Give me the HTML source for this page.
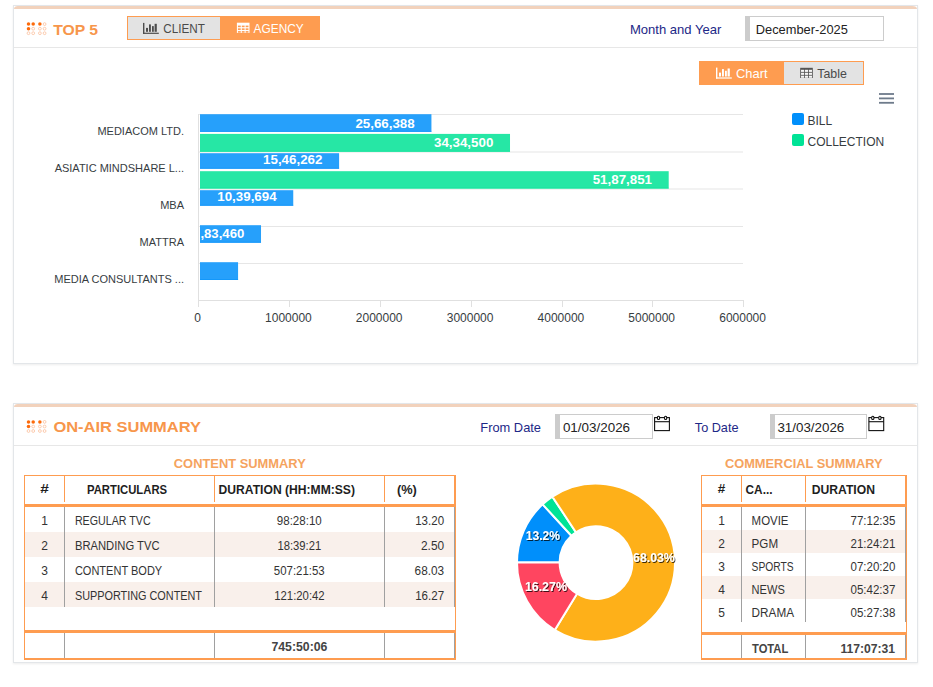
<!DOCTYPE html>
<html><head><meta charset="utf-8"><title>Dashboard</title>
<style>
html,body{margin:0;padding:0;background:#fff;}
body{width:933px;height:687px;overflow:hidden;}
svg{display:block;font-family:"Liberation Sans",sans-serif;}
</style></head>
<body>
<svg width="933" height="687" viewBox="0 0 933 687">
<defs><filter id="cs" x="-5%" y="-5%" width="110%" height="110%"><feGaussianBlur stdDeviation="1.2"/></filter></defs>
<rect x="13" y="6" width="905" height="359" fill="#000" opacity="0.07" filter="url(#cs)"/>
<rect x="13.5" y="5.5" width="904" height="358" fill="#fff" stroke="#e3e6e9" stroke-width="1"/>
<path d="M14 9 Q14 6 18 6 L912 6 Q917 6 917 9 Z" fill="#f2d2bc"/>
<rect x="13" y="404" width="905" height="260" fill="#000" opacity="0.07" filter="url(#cs)"/>
<rect x="13.5" y="403.5" width="904" height="259" fill="#fff" stroke="#e3e6e9" stroke-width="1"/>
<path d="M14 407 Q14 404 18 404 L912 404 Q917 404 917 407 Z" fill="#f2d2bc"/>
<rect x="14" y="47" width="903" height="1" fill="#e7e7e7"/>
<rect x="14" y="445" width="903" height="1" fill="#e7e7e7"/>
<circle cx="28.5" cy="24.1" r="1.75" fill="#fd6a0a"/>
<circle cx="28.5" cy="28.700000000000003" r="1.75" fill="#fd6a0a"/>
<circle cx="28.5" cy="33.2" r="1.4" fill="none" stroke="#fbb48a" stroke-width="0.65"/>
<circle cx="33.2" cy="24.1" r="1.75" fill="#fd6a0a"/>
<circle cx="33.2" cy="28.700000000000003" r="1.4" fill="none" stroke="#fbb48a" stroke-width="0.65"/>
<circle cx="33.2" cy="33.2" r="1.4" fill="none" stroke="#fbb48a" stroke-width="0.65"/>
<circle cx="39.9" cy="24.1" r="1.75" fill="#fd6a0a"/>
<circle cx="39.9" cy="28.700000000000003" r="1.4" fill="none" stroke="#fbb48a" stroke-width="0.65"/>
<circle cx="39.9" cy="33.2" r="1.4" fill="none" stroke="#fbb48a" stroke-width="0.65"/>
<circle cx="44.6" cy="24.1" r="1.4" fill="none" stroke="#fbb48a" stroke-width="0.65"/>
<circle cx="44.6" cy="28.700000000000003" r="1.4" fill="none" stroke="#fbb48a" stroke-width="0.65"/>
<circle cx="44.6" cy="33.2" r="1.4" fill="none" stroke="#fbb48a" stroke-width="0.65"/>
<circle cx="28.5" cy="421.9" r="1.75" fill="#fd6a0a"/>
<circle cx="28.5" cy="426.5" r="1.75" fill="#fd6a0a"/>
<circle cx="28.5" cy="431.0" r="1.4" fill="none" stroke="#fbb48a" stroke-width="0.65"/>
<circle cx="33.2" cy="421.9" r="1.75" fill="#fd6a0a"/>
<circle cx="33.2" cy="426.5" r="1.4" fill="none" stroke="#fbb48a" stroke-width="0.65"/>
<circle cx="33.2" cy="431.0" r="1.4" fill="none" stroke="#fbb48a" stroke-width="0.65"/>
<circle cx="39.9" cy="421.9" r="1.75" fill="#fd6a0a"/>
<circle cx="39.9" cy="426.5" r="1.4" fill="none" stroke="#fbb48a" stroke-width="0.65"/>
<circle cx="39.9" cy="431.0" r="1.4" fill="none" stroke="#fbb48a" stroke-width="0.65"/>
<circle cx="44.6" cy="421.9" r="1.4" fill="none" stroke="#fbb48a" stroke-width="0.65"/>
<circle cx="44.6" cy="426.5" r="1.4" fill="none" stroke="#fbb48a" stroke-width="0.65"/>
<circle cx="44.6" cy="431.0" r="1.4" fill="none" stroke="#fbb48a" stroke-width="0.65"/>
<text x="53.2" y="34.7" font-size="15.5" fill="#f7964b" font-weight="bold" textLength="44.9" lengthAdjust="spacingAndGlyphs">TOP 5</text>
<text x="53.4" y="432.4" font-size="15.5" fill="#f7964b" font-weight="bold" textLength="147.6" lengthAdjust="spacingAndGlyphs">ON-AIR SUMMARY</text>
<rect x="127" y="16" width="193" height="24" fill="#fe9c50"/>
<rect x="128" y="17" width="92" height="22" fill="#e3e3e3"/>
<g fill="#4d4d4d"><rect x="143" y="22.9" width="1.4" height="11"/><rect x="143" y="32.7" width="15.8" height="1.2"/><rect x="146" y="27.9" width="2" height="3.9"/><rect x="149" y="24.4" width="1.9" height="7.4"/><rect x="152" y="26.099999999999998" width="1.8" height="5.7"/><rect x="154.6" y="23.799999999999997" width="2.2" height="8"/></g>
<text x="163.2" y="33" font-size="13" fill="#4a4a4a" textLength="41.6" lengthAdjust="spacingAndGlyphs">CLIENT</text>
<g><rect x="236.9" y="22.7" width="12.6" height="10.2" fill="#ffffff"/><g fill="#fe9c50"><rect x="237.95" y="25.6" width="2.8" height="1.6"/><rect x="237.95" y="28.35" width="2.8" height="1.6"/><rect x="237.95" y="31.1" width="2.8" height="1.6"/><rect x="241.8" y="25.6" width="2.8" height="1.6"/><rect x="241.8" y="28.35" width="2.8" height="1.6"/><rect x="241.8" y="31.1" width="2.8" height="1.6"/><rect x="245.65" y="25.6" width="2.8" height="1.6"/><rect x="245.65" y="28.35" width="2.8" height="1.6"/><rect x="245.65" y="31.1" width="2.8" height="1.6"/></g></g>
<text x="253.6" y="32.8" font-size="13" fill="#ffffff" textLength="50.1" lengthAdjust="spacingAndGlyphs">AGENCY</text>
<text x="629.9" y="33.6" font-size="13" fill="#1d2887" textLength="91.5" lengthAdjust="spacingAndGlyphs">Month and Year</text>
<rect x="745" y="16" width="139" height="25" fill="#cccccc"/>
<rect x="750" y="17" width="133" height="23" fill="#ffffff"/>
<text x="755.8" y="33.6" font-size="13" fill="#222222" textLength="92.0" lengthAdjust="spacingAndGlyphs">December-2025</text>
<rect x="699" y="61" width="165" height="24" fill="#fe9c50"/>
<rect x="784" y="62" width="79" height="22" fill="#e3e3e3"/>
<g fill="#ffffff"><rect x="716" y="67.6" width="1.4" height="11"/><rect x="716" y="77.39999999999999" width="15.8" height="1.2"/><rect x="719" y="72.6" width="2" height="3.9"/><rect x="722" y="69.1" width="1.9" height="7.4"/><rect x="725" y="70.8" width="1.8" height="5.7"/><rect x="727.6" y="68.5" width="2.2" height="8"/></g>
<text x="736.0" y="77.7" font-size="13" fill="#ffffff" textLength="31.5" lengthAdjust="spacingAndGlyphs">Chart</text>
<g><rect x="800.2" y="67.8" width="12.6" height="10.2" fill="#555555"/><g fill="#f6f6f6"><rect x="801.03" y="69.8" width="3.1" height="2.1"/><rect x="801.03" y="72.75" width="3.1" height="2.1"/><rect x="801.03" y="75.7" width="3.1" height="2.1"/><rect x="804.95" y="69.8" width="3.1" height="2.1"/><rect x="804.95" y="72.75" width="3.1" height="2.1"/><rect x="804.95" y="75.7" width="3.1" height="2.1"/><rect x="808.88" y="69.8" width="3.1" height="2.1"/><rect x="808.88" y="72.75" width="3.1" height="2.1"/><rect x="808.88" y="75.7" width="3.1" height="2.1"/></g></g>
<text x="817.2" y="77.7" font-size="13" fill="#4a4a4a" textLength="29.6" lengthAdjust="spacingAndGlyphs">Table</text>
<rect x="879" y="93.1" width="15" height="1.8" fill="#6e7b8b"/>
<rect x="879" y="97.5" width="15" height="1.8" fill="#6e7b8b"/>
<rect x="879" y="101.89999999999999" width="15" height="1.8" fill="#6e7b8b"/>
<rect x="792" y="113" width="12" height="12" rx="2" fill="#008ffb"/>
<rect x="792" y="134" width="12" height="12" rx="2" fill="#00e396"/>
<text x="807.5" y="124.8" font-size="12" fill="#373d3f">BILL</text>
<text x="807.5" y="145.6" font-size="12" fill="#373d3f">COLLECTION</text>
<rect x="199" y="114.0" width="544" height="1" fill="#e6e6e6"/>
<rect x="199" y="151.5" width="544" height="1" fill="#e6e6e6"/>
<rect x="199" y="188.5" width="544" height="1" fill="#e6e6e6"/>
<rect x="199" y="226.0" width="544" height="1" fill="#e6e6e6"/>
<rect x="199" y="263.0" width="544" height="1" fill="#e6e6e6"/>
<rect x="198" y="114" width="1" height="193" fill="#e0e0e0"/>
<rect x="199" y="300" width="544" height="1" fill="#e0e0e0"/>
<rect x="198" y="300" width="1" height="7" fill="#e0e0e0"/>
<rect x="289" y="300" width="1" height="7" fill="#e0e0e0"/>
<rect x="380" y="300" width="1" height="7" fill="#e0e0e0"/>
<rect x="471" y="300" width="1" height="7" fill="#e0e0e0"/>
<rect x="562" y="300" width="1" height="7" fill="#e0e0e0"/>
<rect x="652" y="300" width="1" height="7" fill="#e0e0e0"/>
<rect x="743" y="300" width="1" height="7" fill="#e0e0e0"/>
<text x="197.5" y="321.8" font-size="12" fill="#373d3f" text-anchor="middle">0</text>
<text x="288.4" y="321.8" font-size="12" fill="#373d3f" text-anchor="middle">1000000</text>
<text x="379.2" y="321.8" font-size="12" fill="#373d3f" text-anchor="middle">2000000</text>
<text x="470.1" y="321.8" font-size="12" fill="#373d3f" text-anchor="middle">3000000</text>
<text x="560.9" y="321.8" font-size="12" fill="#373d3f" text-anchor="middle">4000000</text>
<text x="651.7" y="321.8" font-size="12" fill="#373d3f" text-anchor="middle">5000000</text>
<text x="742.6" y="321.8" font-size="12" fill="#373d3f" text-anchor="middle">6000000</text>
<defs><clipPath id="plot"><rect x="199.5" y="100" width="560" height="200"/></clipPath></defs>
<rect x="200" y="114.2" width="231.43" height="17.7" fill="#26a0fb"/>
<rect x="200" y="130.9" width="231.43" height="1" fill="#008ffb" opacity="0.5"/>
<rect x="200" y="133.9" width="310.01" height="17.9" fill="#26e7a5"/>
<rect x="200" y="150.8" width="310.01" height="1" fill="#00e396" opacity="0.5"/>
<rect x="200" y="153.2" width="139.1" height="15.6" fill="#26a0fb"/>
<rect x="200" y="167.8" width="139.1" height="1" fill="#008ffb" opacity="0.5"/>
<rect x="200" y="171.2" width="468.7" height="17.4" fill="#26e7a5"/>
<rect x="200" y="187.6" width="468.7" height="1" fill="#00e396" opacity="0.5"/>
<rect x="200" y="190.2" width="93.25" height="15.6" fill="#26a0fb"/>
<rect x="200" y="204.8" width="93.25" height="1" fill="#008ffb" opacity="0.5"/>
<rect x="200" y="225.2" width="61.01" height="17.6" fill="#26a0fb"/>
<rect x="200" y="241.8" width="61.01" height="1" fill="#008ffb" opacity="0.5"/>
<rect x="200" y="262.2" width="38.07" height="17.8" fill="#26a0fb"/>
<rect x="200" y="279.0" width="38.07" height="1" fill="#008ffb" opacity="0.5"/>
<text x="355.4" y="127.6" font-size="13.6" font-weight="bold" fill="#fff" textLength="59.3" lengthAdjust="spacingAndGlyphs">25,66,388</text>
<text x="434.0" y="147.1" font-size="13.6" font-weight="bold" fill="#fff" textLength="59.3" lengthAdjust="spacingAndGlyphs">34,34,500</text>
<text x="263.1" y="164.4" font-size="13.6" font-weight="bold" fill="#fff" textLength="59.3" lengthAdjust="spacingAndGlyphs">15,46,262</text>
<text x="592.7" y="183.9" font-size="13.6" font-weight="bold" fill="#fff" textLength="59.3" lengthAdjust="spacingAndGlyphs">51,87,851</text>
<text x="217.3" y="201.4" font-size="13.6" font-weight="bold" fill="#fff" textLength="59.3" lengthAdjust="spacingAndGlyphs">10,39,694</text>
<text x="200.4" y="238.0" font-size="13.6" font-weight="bold" fill="#fff" textLength="43.9" lengthAdjust="spacingAndGlyphs">,83,460</text>
<text x="184" y="134.8" font-size="11" fill="#373d3f" text-anchor="end">MEDIACOM LTD.</text>
<text x="184" y="171.9" font-size="11" fill="#373d3f" text-anchor="end">ASIATIC MINDSHARE L...</text>
<text x="184" y="208.5" font-size="11" fill="#373d3f" text-anchor="end">MBA</text>
<text x="184" y="245.9" font-size="11" fill="#373d3f" text-anchor="end">MATTRA</text>
<text x="184" y="283.3" font-size="11" fill="#373d3f" text-anchor="end">MEDIA CONSULTANTS ...</text>
<text x="480.3" y="431.7" font-size="13" fill="#1d2887" textLength="60.7" lengthAdjust="spacingAndGlyphs">From Date</text>
<text x="694.8" y="432" font-size="13" fill="#1d2887" textLength="43.7" lengthAdjust="spacingAndGlyphs">To Date</text>
<rect x="555" y="414" width="98" height="25" fill="#cccccc"/>
<rect x="560" y="415" width="92" height="23" fill="#ffffff"/>
<text x="562.9" y="432" font-size="13" fill="#222222" textLength="67.2" lengthAdjust="spacingAndGlyphs">01/03/2026</text>
<g fill="none" stroke="#111" stroke-width="1.1"><rect x="654.6" y="417.6" width="14.8" height="13"/><line x1="654.6" y1="421.7" x2="669.4" y2="421.7"/></g><g fill="#fff" stroke="#111" stroke-width="1.1"><rect x="657.4" y="416.2" width="2.2" height="3.3" rx="1"/><rect x="664.5" y="416.2" width="2.2" height="3.3" rx="1"/></g>
<rect x="770" y="414" width="97" height="25" fill="#cccccc"/>
<rect x="775" y="415" width="91" height="23" fill="#ffffff"/>
<text x="777.4" y="432" font-size="13" fill="#222222" textLength="66.9" lengthAdjust="spacingAndGlyphs">31/03/2026</text>
<g fill="none" stroke="#111" stroke-width="1.1"><rect x="868.9" y="417.6" width="14.8" height="13"/><line x1="868.9" y1="421.7" x2="883.6999999999999" y2="421.7"/></g><g fill="#fff" stroke="#111" stroke-width="1.1"><rect x="871.6999999999999" y="416.2" width="2.2" height="3.3" rx="1"/><rect x="878.8" y="416.2" width="2.2" height="3.3" rx="1"/></g>
<text x="173.8" y="467.7" font-size="13" fill="#f5a35e" font-weight="bold" textLength="132.0" lengthAdjust="spacingAndGlyphs">CONTENT SUMMARY</text>
<text x="724.9" y="468.2" font-size="13" fill="#f5a35e" font-weight="bold" textLength="157.7" lengthAdjust="spacingAndGlyphs">COMMERCIAL SUMMARY</text>
<rect x="24" y="475" width="432" height="1" fill="#fe9c50"/>
<rect x="24" y="475" width="1" height="185" fill="#fe9c50"/>
<rect x="455" y="475" width="1" height="185" fill="#fe9c50"/>
<rect x="24" y="658" width="432" height="2" fill="#fe9c50"/>
<rect x="24" y="504" width="432" height="3" fill="#fe9c50"/>
<rect x="24" y="630" width="432" height="3" fill="#fe9c50"/>
<rect x="64" y="476" width="1" height="26" fill="#fe9c50"/>
<rect x="214" y="476" width="1" height="26" fill="#fe9c50"/>
<rect x="384" y="476" width="1" height="26" fill="#fe9c50"/>
<rect x="454" y="476" width="1" height="28" fill="#fe9c50"/>
<rect x="25" y="532" width="429" height="25" fill="#f9f0eb"/>
<rect x="25" y="582" width="429" height="25" fill="#f9f0eb"/>
<rect x="64" y="507" width="1" height="100" fill="#a0a0a0"/>
<rect x="214" y="507" width="1" height="100" fill="#a0a0a0"/>
<rect x="384" y="507" width="1" height="100" fill="#a0a0a0"/>
<rect x="454" y="507" width="1" height="100" fill="#a0a0a0"/>
<rect x="64" y="633" width="1" height="25" fill="#a0a0a0"/>
<rect x="214" y="633" width="1" height="25" fill="#a0a0a0"/>
<rect x="384" y="633" width="1" height="25" fill="#a0a0a0"/>
<rect x="454" y="633" width="1" height="25" fill="#a0a0a0"/>
<rect x="701" y="475" width="206" height="1" fill="#fe9c50"/>
<rect x="701" y="475" width="1" height="185" fill="#fe9c50"/>
<rect x="906" y="475" width="1" height="185" fill="#fe9c50"/>
<rect x="701" y="658" width="206" height="2" fill="#fe9c50"/>
<rect x="701" y="504" width="206" height="3" fill="#fe9c50"/>
<rect x="701" y="632" width="206" height="3" fill="#fe9c50"/>
<rect x="741" y="476" width="1" height="26" fill="#fe9c50"/>
<rect x="805" y="476" width="1" height="26" fill="#fe9c50"/>
<rect x="905" y="476" width="1" height="28" fill="#fe9c50"/>
<rect x="702" y="530" width="203" height="23" fill="#f9f0eb"/>
<rect x="702" y="576" width="203" height="23" fill="#f9f0eb"/>
<rect x="741" y="507" width="1" height="115" fill="#a0a0a0"/>
<rect x="805" y="507" width="1" height="115" fill="#a0a0a0"/>
<rect x="905" y="507" width="1" height="115" fill="#a0a0a0"/>
<rect x="741" y="635" width="1" height="23" fill="#a0a0a0"/>
<rect x="805" y="635" width="1" height="23" fill="#a0a0a0"/>
<rect x="905" y="635" width="1" height="23" fill="#a0a0a0"/>
<text x="40.2" y="493" font-size="12" fill="#1e1e1e" font-weight="bold" textLength="8.6" lengthAdjust="spacingAndGlyphs">#</text>
<text x="87.0" y="493.6" font-size="12" fill="#1e1e1e" font-weight="bold" textLength="80.1" lengthAdjust="spacingAndGlyphs">PARTICULARS</text>
<text x="218.6" y="493.6" font-size="12" fill="#1e1e1e" font-weight="bold" textLength="136.4" lengthAdjust="spacingAndGlyphs">DURATION (HH:MM:SS)</text>
<text x="396.9" y="493.6" font-size="12" fill="#1e1e1e" font-weight="bold" textLength="19.9" lengthAdjust="spacingAndGlyphs">(%)</text>
<text x="44.5" y="525" font-size="12" fill="#333333" text-anchor="middle">1</text>
<text x="74.9" y="525" font-size="12" fill="#333333" textLength="75.7" lengthAdjust="spacingAndGlyphs">REGULAR TVC</text>
<text x="276.8" y="525" font-size="12" fill="#333333" textLength="45.0" lengthAdjust="spacingAndGlyphs">98:28:10</text>
<text x="415.2" y="525" font-size="12" fill="#333333" textLength="28.9" lengthAdjust="spacingAndGlyphs">13.20</text>
<text x="44.5" y="550" font-size="12" fill="#333333" text-anchor="middle">2</text>
<text x="74.9" y="550" font-size="12" fill="#333333" textLength="84.6" lengthAdjust="spacingAndGlyphs">BRANDING TVC</text>
<text x="277.4" y="550" font-size="12" fill="#333333" textLength="43.8" lengthAdjust="spacingAndGlyphs">18:39:21</text>
<text x="421.0" y="550" font-size="12" fill="#333333" textLength="23.1" lengthAdjust="spacingAndGlyphs">2.50</text>
<text x="44.5" y="575" font-size="12" fill="#333333" text-anchor="middle">3</text>
<text x="74.9" y="575" font-size="12" fill="#333333" textLength="87.3" lengthAdjust="spacingAndGlyphs">CONTENT BODY</text>
<text x="273.8" y="575" font-size="12" fill="#333333" textLength="50.9" lengthAdjust="spacingAndGlyphs">507:21:53</text>
<text x="414.6" y="575" font-size="12" fill="#333333" textLength="29.5" lengthAdjust="spacingAndGlyphs">68.03</text>
<text x="44.5" y="600" font-size="12" fill="#333333" text-anchor="middle">4</text>
<text x="74.9" y="600" font-size="12" fill="#333333" textLength="127.1" lengthAdjust="spacingAndGlyphs">SUPPORTING CONTENT</text>
<text x="274.2" y="600" font-size="12" fill="#333333" textLength="50.5" lengthAdjust="spacingAndGlyphs">121:20:42</text>
<text x="415.2" y="600" font-size="12" fill="#333333" textLength="28.9" lengthAdjust="spacingAndGlyphs">16.27</text>
<text x="271.4" y="651" font-size="12" fill="#444444" font-weight="bold" textLength="56.0" lengthAdjust="spacingAndGlyphs">745:50:06</text>
<text x="717.8" y="493" font-size="12" fill="#1e1e1e" font-weight="bold" textLength="7.5" lengthAdjust="spacingAndGlyphs">#</text>
<text x="745.6" y="493.6" font-size="12" fill="#1e1e1e" font-weight="bold" textLength="26.9" lengthAdjust="spacingAndGlyphs">CA...</text>
<text x="811.7" y="493.6" font-size="12" fill="#1e1e1e" font-weight="bold" textLength="63.3" lengthAdjust="spacingAndGlyphs">DURATION</text>
<text x="721.5" y="524.7" font-size="12" fill="#333333" text-anchor="middle">1</text>
<text x="751.6" y="524.7" font-size="12" fill="#333333" textLength="36.9" lengthAdjust="spacingAndGlyphs">MOVIE</text>
<text x="850.5" y="524.7" font-size="12" fill="#333333" textLength="44.9" lengthAdjust="spacingAndGlyphs">77:12:35</text>
<text x="721.5" y="547.7" font-size="12" fill="#333333" text-anchor="middle">2</text>
<text x="751.6" y="547.7" font-size="12" fill="#333333" textLength="26.5" lengthAdjust="spacingAndGlyphs">PGM</text>
<text x="850.5" y="547.7" font-size="12" fill="#333333" textLength="44.9" lengthAdjust="spacingAndGlyphs">21:24:21</text>
<text x="721.5" y="570.7" font-size="12" fill="#333333" text-anchor="middle">3</text>
<text x="751.6" y="570.7" font-size="12" fill="#333333" textLength="42.0" lengthAdjust="spacingAndGlyphs">SPORTS</text>
<text x="850.5" y="570.7" font-size="12" fill="#333333" textLength="44.9" lengthAdjust="spacingAndGlyphs">07:20:20</text>
<text x="721.5" y="593.7" font-size="12" fill="#333333" text-anchor="middle">4</text>
<text x="751.6" y="593.7" font-size="12" fill="#333333" textLength="33.2" lengthAdjust="spacingAndGlyphs">NEWS</text>
<text x="850.5" y="593.7" font-size="12" fill="#333333" textLength="44.9" lengthAdjust="spacingAndGlyphs">05:42:37</text>
<text x="721.5" y="616.7" font-size="12" fill="#333333" text-anchor="middle">5</text>
<text x="751.6" y="616.7" font-size="12" fill="#333333" textLength="42.4" lengthAdjust="spacingAndGlyphs">DRAMA</text>
<text x="850.5" y="616.7" font-size="12" fill="#333333" textLength="44.9" lengthAdjust="spacingAndGlyphs">05:27:38</text>
<text x="752.0" y="652.5" font-size="12" fill="#444444" font-weight="bold" textLength="36.3" lengthAdjust="spacingAndGlyphs">TOTAL</text>
<text x="840.4" y="652.5" font-size="12" fill="#444444" font-weight="bold" textLength="54.7" lengthAdjust="spacingAndGlyphs">117:07:31</text>
<path d="M517.00 562.60 A79 79 0 0 1 542.65 504.34 L571.42 535.75 A36.4 36.4 0 0 0 559.60 562.60 Z" fill="#008ffb" stroke="#fff" stroke-width="2"/>
<path d="M542.65 504.34 A79 79 0 0 1 552.42 496.71 L575.92 532.24 A36.4 36.4 0 0 0 571.42 535.75 Z" fill="#00e396" stroke="#fff" stroke-width="2"/>
<path d="M552.42 496.71 A79 79 0 1 1 554.81 630.01 L577.02 593.66 A36.4 36.4 0 1 0 575.92 532.24 Z" fill="#feb019" stroke="#fff" stroke-width="2"/>
<path d="M554.81 630.01 A79 79 0 0 1 517.00 562.60 L559.60 562.60 A36.4 36.4 0 0 0 577.02 593.66 Z" fill="#ff4560" stroke="#fff" stroke-width="2"/>
<defs><filter id="ds" x="-20%" y="-40%" width="140%" height="180%"><feDropShadow dx="1" dy="1" stdDeviation="0.6" flood-color="#000" flood-opacity="0.75"/></filter></defs>
<text x="525.8" y="540.0" font-size="13" font-weight="bold" fill="#fff" filter="url(#ds)" textLength="34.2" lengthAdjust="spacingAndGlyphs">13.2%</text>
<text x="524.9" y="590.9" font-size="13" font-weight="bold" fill="#fff" filter="url(#ds)" textLength="42.0" lengthAdjust="spacingAndGlyphs">16.27%</text>
<text x="633.1" y="562.0" font-size="13" font-weight="bold" fill="#fff" filter="url(#ds)" textLength="41.6" lengthAdjust="spacingAndGlyphs">68.03%</text>
</svg>
</body></html>
